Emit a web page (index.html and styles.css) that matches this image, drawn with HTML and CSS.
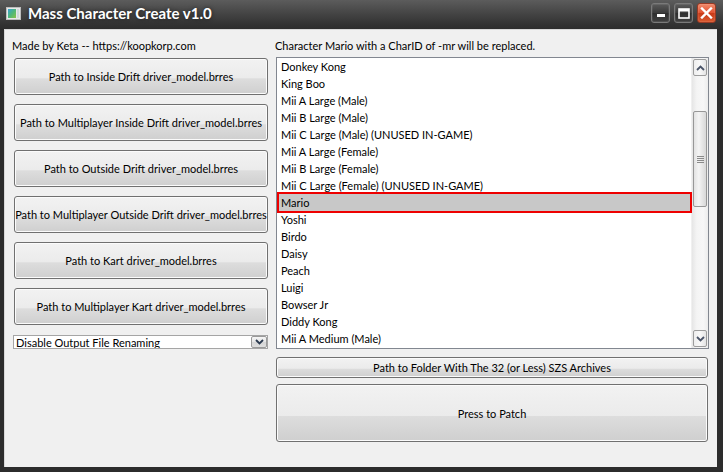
FILE: index.html
```html
<!DOCTYPE html>
<html>
<head>
<meta charset="utf-8">
<link rel="stylesheet" href="styles.css">
</head>
<body>
<div class="window">
  <div class="titlebar">
    <svg class="app-icon" width="15" height="13" viewBox="0 0 15 13">
      <defs>
        <linearGradient id="ig" x1="0" y1="0" x2="1" y2="1">
          <stop offset="0" stop-color="#3aa0d8"/>
          <stop offset="0.5" stop-color="#4fb77a"/>
          <stop offset="1" stop-color="#8bc34a"/>
        </linearGradient>
      </defs>
      <rect x="0.5" y="0.5" width="14" height="12" fill="#e8e8e8" stroke="#bdbdbd"/>
      <rect x="2" y="2" width="8" height="9" fill="url(#ig)"/>
      <rect x="11" y="2" width="2" height="9" fill="#cfd8dc"/>
    </svg>
    <span class="title">Mass Character Create v1.0</span>
    <div class="caption-buttons">
      <div class="cap">
        <svg width="10" height="10" viewBox="0 0 10 10"><rect x="1" y="6" width="8" height="3" fill="#fff"/></svg>
      </div>
      <div class="cap">
        <svg width="12" height="11" viewBox="0 0 12 11"><rect x="1" y="1" width="10" height="9" fill="none" stroke="#fff" stroke-width="1.6"/><rect x="1" y="1" width="10" height="2.5" fill="#fff"/></svg>
      </div>
      <div class="cap close">
        <svg width="13" height="12" viewBox="0 0 13 12"><path d="M2 1.5 L11 10.5 M11 1.5 L2 10.5" stroke="#fff" stroke-width="2.4" stroke-linecap="square"/></svg>
      </div>
    </div>
  </div>
  <div class="client">
    <div class="col-left">
      <div class="label label-left">Made by Keta -- https://koopkorp.com</div>
      <div class="btn btn-tall">Path to Inside Drift driver_model.brres</div>
      <div class="btn btn-tall">Path to Multiplayer Inside Drift driver_model.brres</div>
      <div class="btn btn-tall">Path to Outside Drift driver_model.brres</div>
      <div class="btn btn-tall">Path to Multiplayer Outside Drift driver_model.brres</div>
      <div class="btn btn-tall">Path to Kart driver_model.brres</div>
      <div class="btn btn-tall">Path to Multiplayer Kart driver_model.brres</div>
      <div class="combo">
        <span class="combo-text">Disable Output File Renaming</span>
        <div class="combo-arrow">
          <svg width="9" height="6" viewBox="0 0 9 6"><path d="M1 1 L4.5 4.5 L8 1" fill="none" stroke="#2b3a50" stroke-width="1.8"/></svg>
        </div>
      </div>
    </div>
    <div class="col-right">
      <div class="label">Character Mario with a CharID of -mr will be replaced.</div>
      <div class="listbox">
        <div class="items">
          <div class="item">Donkey Kong</div>
          <div class="item">King Boo</div>
          <div class="item">Mii A Large (Male)</div>
          <div class="item">Mii B Large (Male)</div>
          <div class="item">Mii C Large (Male) (UNUSED IN-GAME)</div>
          <div class="item">Mii A Large (Female)</div>
          <div class="item">Mii B Large (Female)</div>
          <div class="item">Mii C Large (Female) (UNUSED IN-GAME)</div>
          <div class="item selected">Mario</div>
          <div class="item">Yoshi</div>
          <div class="item">Birdo</div>
          <div class="item">Daisy</div>
          <div class="item">Peach</div>
          <div class="item">Luigi</div>
          <div class="item">Bowser Jr</div>
          <div class="item">Diddy Kong</div>
          <div class="item">Mii A Medium (Male)</div>
        </div>
        <div class="vscroll">
          <div class="sb-btn">
            <svg width="9" height="6" viewBox="0 0 9 6"><path d="M1 5 L4.5 1.5 L8 5" fill="none" stroke="#4a5468" stroke-width="1.8"/></svg>
          </div>
          <div class="sb-gap-top"></div>
          <div class="sb-thumb">
            <div class="grip"></div>
          </div>
          <div class="sb-gap-bottom"></div>
          <div class="sb-btn">
            <svg width="9" height="6" viewBox="0 0 9 6"><path d="M1 1 L4.5 4.5 L8 1" fill="none" stroke="#4a5468" stroke-width="1.8"/></svg>
          </div>
        </div>
      </div>
      <div class="btn btn-folder">Path to Folder With The 32 (or Less) SZS Archives</div>
      <div class="btn btn-patch">Press to Patch</div>
    </div>
  </div>
</div>
</body>
</html>
```

FILE: styles.css
```css
html, body {
  margin: 0;
  padding: 0;
}
body {
  width: 723px;
  height: 472px;
  overflow: hidden;
  font-family: "Lato", "Noto Sans", sans-serif;
  font-size: 11px;
  color: #000;
}
.window {
  width: 723px;
  height: 472px;
  display: flex;
  flex-direction: column;
  background: linear-gradient(to bottom, #5c5c5c 0px, #474747 12px, #333333 24px, #2c2c2c 30px, #2c2c2c 100%);
}
.titlebar {
  height: 29px;
  display: flex;
  align-items: center;
  padding-left: 6px;
  flex: none;
}
.app-icon {
  margin-top: -3px;
  margin-right: 7px;
  flex: none;
}
.title {
  font-family: "Lato", "Noto Sans", sans-serif;
  font-weight: 700;
  font-size: 15px;
  color: #fff;
  margin-top: -3px;
  text-shadow: 0 0 4px rgba(0,0,0,0.6);
}
.caption-buttons {
  margin-left: auto;
  margin-right: 7px;
  margin-top: -3px;
  display: flex;
  gap: 4px;
}
.cap {
  width: 19px;
  height: 20px;
  box-sizing: border-box;
  border: 1px solid #7a7a7a;
  border-radius: 3px;
  background: linear-gradient(to bottom, #5a5a5a, #3a3a3a 50%, #2e2e2e 51%, #404040);
  display: flex;
  align-items: center;
  justify-content: center;
  box-shadow: inset 0 0 0 1px rgba(255,255,255,0.08);
}
.cap.close {
  border-color: #9a3a24;
  background: linear-gradient(to bottom, #f08a6c, #e0512f 50%, #c83a18 51%, #d85a30);
}
.client {
  flex: 1;
  margin: 0 6px 5px 4px;
  background: #f0f0f0;
  display: flex;
  gap: 7px;
  padding: 9px 8px 0 9px;
  box-shadow: inset 1px 1px 0 #d8d8d8;
}
.col-left {
  width: 255px;
  display: flex;
  flex-direction: column;
  gap: 9px;
}
.col-right {
  width: 434px;
  display: flex;
  flex-direction: column;
}
.label {
  height: 15px;
  line-height: 15px;
  white-space: nowrap;
}
.label-left {
  margin-left: -1px;
  margin-bottom: -4px;
}
.btn {
  box-sizing: border-box;
  border: 1px solid #707070;
  border-radius: 3px;
  background: linear-gradient(to bottom, #f2f2f2 0%, #ebebeb 55%, #dddddd 56%, #cfcfcf 100%);
  box-shadow: inset 0 0 0 1px #fbfbfb;
  display: flex;
  align-items: center;
  justify-content: center;
  white-space: nowrap;
}
.btn-tall {
  height: 37px;
  margin-left: 1px;
}
.combo {
  height: 14px;
  margin-top: 1px;
  box-sizing: border-box;
  border: 1px solid #a5a5a5;
  background: #fff;
  display: flex;
  overflow: hidden;
  position: relative;
}
.combo-text {
  padding-left: 2px;
  line-height: 15px;
  margin-top: -1px;
  flex: 1;
  white-space: nowrap;
}
.combo-arrow {
  width: 16px;
  height: 12px;
  box-sizing: border-box;
  border: 1px solid #9a9a9a;
  border-radius: 2px;
  background: linear-gradient(to bottom, #f6f6f6, #e4e4e4 50%, #d6d6d6 51%, #dedede);
  display: flex;
  align-items: center;
  justify-content: center;
  margin-right: 0;
}
.listbox {
  margin-top: 4px;
  margin-left: 1px;
  height: 292px;
  box-sizing: border-box;
  border: 1px solid #828790;
  background: #fff;
  display: flex;
}
.items {
  flex: 1;
}
.item {
  height: 17px;
  line-height: 17px;
  padding-left: 4px;
  white-space: nowrap;
  position: relative;
}
.item.selected {
  background: #c8c8c8;
}
.item.selected::after {
  content: "";
  position: absolute;
  left: 0;
  right: -1px;
  top: -2px;
  bottom: -2px;
  border: 2px solid #ee0000;
}
.vscroll {
  width: 17px;
  display: flex;
  flex-direction: column;
  background: linear-gradient(to right, #e6e6e6, #f4f4f4 30%, #f7f7f7 70%, #ececec);
  padding: 1px 1px 1px 1px;
  box-sizing: border-box;
  border-left: 1px solid #f0f0f0;
}
.sb-btn {
  height: 17px;
  box-sizing: border-box;
  border: 1px solid #9c9c9c;
  border-radius: 2px;
  background: linear-gradient(to right, #eeeeee, #f8f8f8 50%, #e4e4e4);
  display: flex;
  align-items: center;
  justify-content: center;
}
.sb-gap-top {
  height: 35px;
}
.sb-thumb {
  height: 96px;
  box-sizing: border-box;
  border: 1px solid #979797;
  border-radius: 2px;
  background: linear-gradient(to right, #e2e2e2, #f4f4f4 40%, #eaeaea 60%, #d8d8d8);
  display: flex;
  align-items: center;
  justify-content: center;
}
.grip {
  width: 7px;
  height: 7px;
  background: repeating-linear-gradient(to bottom, #8a8a8a 0, #8a8a8a 1px, transparent 1px, transparent 2px);
}
.sb-gap-bottom {
  flex: 1;
}
.btn-folder {
  height: 21px;
  margin-top: 8px;
  margin-left: 1px;
  margin-right: 1px;
}
.btn-patch {
  height: 58px;
  margin-top: 6px;
  margin-left: 1px;
  margin-right: 1px;
}
```
